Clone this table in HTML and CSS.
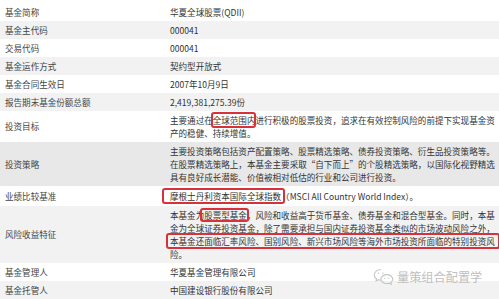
FILE: index.html
```html
<!DOCTYPE html>
<html lang="zh-CN">
<head>
<meta charset="utf-8">
<title>基金概况</title>
<link rel="stylesheet" href="styles.css">
</head>
<body>
<div class="table">
  <div class="row"><div class="label">基金简称</div><div class="value">华夏全球股票(QDII)</div></div>
  <div class="row gray"><div class="label">基金主代码</div><div class="value">000041</div></div>
  <div class="row"><div class="label">交易代码</div><div class="value">000041</div></div>
  <div class="row gray"><div class="label">基金运作方式</div><div class="value">契约型开放式</div></div>
  <div class="row"><div class="label">基金合同生效日</div><div class="value">2007年10月9日</div></div>
  <div class="row gray"><div class="label">报告期末基金份额总额</div><div class="value">2,419,381,275.39份</div></div>
  <div class="row"><div class="label">投资目标</div><div class="value">
    <span class="line">主要通过在<span class="mark m-a">全球范围内</span>进行积极的股票投资，追求在有效控制风险的前提下实现基金资</span>
    <span class="line">产的稳健、持续增值。</span>
  </div></div>
  <div class="row dark"><div class="label">投资策略</div><div class="value">
    <span class="line">主要投资策略包括资产配置策略、股票精选策略、债券投资策略、衍生品投资策略等。</span>
    <span class="line">在股票精选策略上，本基金主要采取“自下而上”的个股精选策略，以国际化视野精选</span>
    <span class="line">具有良好成长潜能、价值被相对低估的行业和公司进行投资。</span>
  </div></div>
  <div class="row tall"><div class="label">业绩比较基准</div><div class="value">
    <span class="line"><span class="mark m-b">摩根士丹利资本国际全球指数</span>（MSCI All Country World Index）。</span>
  </div></div>
  <div class="row gray"><div class="label">风险收益特征</div><div class="value">
    <span class="line">本基金为<span class="mark m-c">股票型基金</span>，风险和收益高于货币基金、债券基金和混合型基金。同时，本基</span>
    <span class="line">金为全球证券投资基金，除了需要承担与国内证券投资基金类似的市场波动风险之外，</span>
    <span class="line"><span class="mark m-d">本基金还面临汇率风险、国别风险、新兴市场风险等海外市场投资所面临的特别投资风</span></span>
    <span class="line">险。</span>
  </div></div>
  <div class="row"><div class="label">基金管理人</div><div class="value">华夏基金管理有限公司</div></div>
  <div class="row gray"><div class="label">基金托管人</div><div class="value">中国建设银行股份有限公司</div></div>
</div>
<div class="watermark">
  <svg class="wm-icon" width="21" height="17" viewBox="0 0 21 17" fill="none" stroke="#c4c4c4" stroke-width="1.1">
    <path d="M8 1.5C4.2 1.5 1.3 3.9 1.3 6.9c0 1.7 0.9 3.1 2.4 4.1l-0.6 2 2.3-1.2c0.8 0.2 1.6 0.3 2.5 0.3"/>
    <circle cx="5.6" cy="5.3" r="0.7" fill="#c4c4c4" stroke="none"/>
    <circle cx="10" cy="5.3" r="0.7" fill="#c4c4c4" stroke="none"/>
    <path d="M13.8 6.6c3.3 0 5.9 2.1 5.9 4.7 0 1.4-0.7 2.5-1.9 3.3l0.5 1.6-1.9-1c-0.8 0.2-1.7 0.4-2.6 0.4-3.3 0-5.9-2.1-5.9-4.4 0-2.5 2.6-4.6 5.9-4.6z"/>
    <circle cx="11.8" cy="10.3" r="0.6" fill="#c4c4c4" stroke="none"/>
    <circle cx="15.8" cy="10.3" r="0.6" fill="#c4c4c4" stroke="none"/>
  </svg>
  <span class="wm-text">量策组合配置学</span>
</div>
</body>
</html>
```

FILE: styles.css
```css
* { box-sizing: border-box; }
html, body {
  margin: 0;
  padding: 0;
  background: #fff;
}
body {
  width: 499px;
  height: 299px;
  overflow: hidden;
  padding-top: 3px;
  position: relative;
  font-family: "Noto Sans CJK SC", "Noto Sans", sans-serif;
  font-size: 8.55px;
  line-height: 13px;
  color: #333;
}
.table {
  display: flex;
  flex-direction: column;
}
.row {
  display: grid;
  grid-template-columns: 170px 1fr;
  align-items: center;
  padding: 2.5px 0;
}
.row.gray { background: #f2f2f2; }
.row.dark { background: #e8e8e8; }
.row.tall { padding: 3.5px 0; }
.label {
  padding-left: 5px;
  color: #444;
  white-space: nowrap;
}
.value {
  white-space: nowrap;
  color: #333;
}
.line { display: block; }
.mark {
  position: relative;
}
.mark::after {
  content: "";
  position: absolute;
  border: 2px solid #d9313b;
  border-radius: 3px;
}
.m-a::after { left: -2px; right: -1px; top: -2px; bottom: -2px; }
.m-b::after { left: -8px; right: -4px; top: -2px; bottom: -2px; }
.m-c::after { left: -4px; right: -2px; top: -1px; bottom: -1px; }
.m-d::after { left: -4px; right: -5px; top: -2px; bottom: -2px; }
.watermark {
  position: absolute;
  left: 373px;
  top: 268px;
  display: flex;
  align-items: center;
  gap: 3px;
}
.wm-text {
  font-size: 12.2px;
  line-height: 16px;
  color: #c0c0c0;
  letter-spacing: 0;
}
```
